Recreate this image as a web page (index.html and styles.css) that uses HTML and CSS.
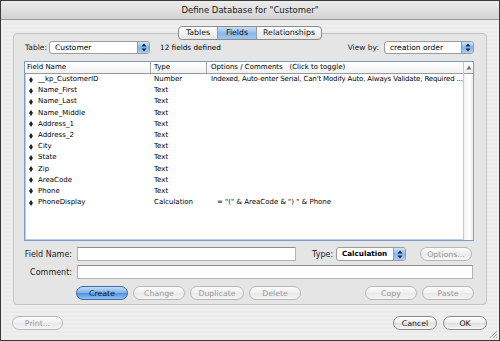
FILE: index.html
```html
<!DOCTYPE html>
<html>
<head>
<meta charset="utf-8">
<title>Define Database</title>
<link rel="stylesheet" href="styles.css">
</head>
<body>
<div class="window">
  <div class="titlebar">Define Database for "Customer"</div>
  <div class="body">
    <div class="tabs">
      <span class="tab t1">Tables</span>
      <span class="tab t2 sel">Fields</span>
      <span class="tab t3">Relationships</span>
    </div>
    <div class="group">
      <div class="toprow">
        <span class="lbl lbl-table">Table:</span>
        <div class="popup pop-table"><span class="ptext">Customer</span><span class="parrows"><svg width="6" height="9" viewBox="0 0 6 9"><path d="M3 0.5L5.5 3.5H0.5Z M3 8.5L5.5 5.5H0.5Z" fill="#1c2633"/></svg></span></div>
        <span class="count">12 fields defined</span>
        <span class="spacer"></span>
        <span class="lbl lbl-view">View by:</span>
        <div class="popup pop-view"><span class="ptext">creation order</span><span class="parrows"><svg width="6" height="9" viewBox="0 0 6 9"><path d="M3 0.5L5.5 3.5H0.5Z M3 8.5L5.5 5.5H0.5Z" fill="#1c2633"/></svg></span></div>
      </div>
      <div class="list">
        <div class="lmain">
          <div class="lhead">
            <div class="c1">Field Name</div>
            <div class="c2">Type</div>
            <div class="c3">Options / Comments&nbsp;&nbsp;&nbsp;(Click to toggle)</div>
          </div>
          <div class="lrows">
            <div class="row"><div class="c1"><i class="mk"></i><span>__kp_CustomerID</span></div><div class="c2">Number</div><div class="c3 opts">Indexed, Auto-enter Serial, Can't Modify Auto, Always Validate, Required ...</div></div>
            <div class="row"><div class="c1"><i class="mk"></i><span>Name_First</span></div><div class="c2">Text</div><div class="c3"></div></div>
            <div class="row"><div class="c1"><i class="mk"></i><span>Name_Last</span></div><div class="c2">Text</div><div class="c3"></div></div>
            <div class="row"><div class="c1"><i class="mk"></i><span>Name_Middle</span></div><div class="c2">Text</div><div class="c3"></div></div>
            <div class="row"><div class="c1"><i class="mk"></i><span>Address_1</span></div><div class="c2">Text</div><div class="c3"></div></div>
            <div class="row"><div class="c1"><i class="mk"></i><span>Address_2</span></div><div class="c2">Text</div><div class="c3"></div></div>
            <div class="row"><div class="c1"><i class="mk"></i><span>City</span></div><div class="c2">Text</div><div class="c3"></div></div>
            <div class="row"><div class="c1"><i class="mk"></i><span>State</span></div><div class="c2">Text</div><div class="c3"></div></div>
            <div class="row"><div class="c1"><i class="mk"></i><span>Zip</span></div><div class="c2">Text</div><div class="c3"></div></div>
            <div class="row"><div class="c1"><i class="mk"></i><span>AreaCode</span></div><div class="c2">Text</div><div class="c3"></div></div>
            <div class="row"><div class="c1"><i class="mk"></i><span>Phone</span></div><div class="c2">Text</div><div class="c3"></div></div>
            <div class="row"><div class="c1"><i class="mk"></i><span>PhoneDisplay</span></div><div class="c2">Calculation</div><div class="c3 calc">= "(" &amp; AreaCode &amp; ") " &amp; Phone</div></div>
          </div>
        </div>
        <div class="vscroll">
          <div class="vtop"><svg width="6" height="5" viewBox="0 0 6 5"><path d="M3 0.5L5.5 4.5H0.5Z" fill="#6b7380"/></svg></div>
          <div class="vtrack"></div>
        </div>
      </div>
      <div class="frow frow-name">
        <span class="flabel">Field Name:</span>
        <div class="input in-name"></div>
        <span class="lbl type-lbl">Type:</span>
        <div class="popup pop-type"><span class="ptext bold">Calculation</span><span class="parrows"><svg width="6" height="9" viewBox="0 0 6 9"><path d="M3 0.5L5.5 3.5H0.5Z M3 8.5L5.5 5.5H0.5Z" fill="#1c2633"/></svg></span></div>
        <span class="btn dis btn-options">Options...</span>
      </div>
      <div class="frow frow-comment">
        <span class="flabel">Comment:</span>
        <div class="input in-comment"></div>
      </div>
      <div class="brow">
        <span class="btn primary w52">Create</span>
        <span class="btn dis w52">Change</span>
        <span class="btn dis w54">Duplicate</span>
        <span class="btn dis w52">Delete</span>
        <span class="spacer"></span>
        <span class="btn dis w52">Copy</span>
        <span class="btn dis w52">Paste</span>
      </div>
    </div>
    <div class="bottom">
      <span class="btn dis w51">Print...</span>
      <span class="spacer"></span>
      <span class="btn w44">Cancel</span>
      <span class="btn w44">OK</span>
    </div>
  </div>
  <div class="grip"><svg width="9" height="9" viewBox="0 0 9 9"><path d="M8 1L1 8M8 4L4 8M8 7L7 8" stroke="#9a9a9a" stroke-width="1"/></svg></div>
</div>
</body>
</html>
```

FILE: styles.css
```css
* { box-sizing: border-box; margin: 0; padding: 0; }
html, body { width: 500px; height: 341px; overflow: hidden; }
body {
  font-family: "DejaVu Sans", "Liberation Sans", sans-serif;
  font-size: 7px;
  color: #000;
  background: #fff;
}
.window {
  width: 500px;
  height: 341px;
  border: 1px solid #3a3a3a;
  background: repeating-linear-gradient(#efefef 0 2px, #eaeaea 2px 4px);
  display: flex;
  flex-direction: column;
  position: relative;
}
.titlebar {
  flex: none;
  height: 19px;
  line-height: 18px;
  text-align: center;
  font-size: 8.5px;
  color: #1a1a1a;
  background: linear-gradient(#ececec, #d3d3d3);
  border-bottom: 1px solid #9c9c9c;
}
.body {
  flex: 1;
  display: flex;
  flex-direction: column;
  padding: 6px 12px 0 12px;
}
.tabs {
  align-self: center;
  display: flex;
  height: 14px;
  border: 1px solid #8c8c8c;
  border-radius: 4px;
  background: linear-gradient(#ffffff, #e6e6e6);
  position: relative;
  z-index: 1;
  overflow: hidden;
}
.tab {
  font-size: 7.8px;
  line-height: 12px;
  text-align: center;
  color: #111;
}
.tab + .tab { border-left: 1px solid #9a9a9a; }
.t1 { width: 38px; }
.t2 { width: 39px; }
.t3 { width: 65px; }
.tab.sel {
  background: linear-gradient(#c9def7, #8ab8ee 55%, #9fc6f2);
}
.group {
  margin-top: -7px;
  border: 1px solid #c4c4c4;
  border-radius: 4px;
  background: #e5e5e5;
  padding: 7px 12px 4px 10px;
  display: flex;
  flex-direction: column;
}
.toprow {
  height: 13px;
  display: flex;
  align-items: center;
}
.lbl { font-size: 7.5px; color: #222; white-space: nowrap; }
.lbl-table { width: 25px; padding-left: 1px; }
.lbl-view { margin-right: 5px; }
.spacer { flex: 1; }
.count { margin-left: 10px; font-size: 7.3px; }
.popup {
  height: 13px;
  display: flex;
  align-items: stretch;
  background: #fff;
  border: 1px solid #9c9c9c;
  border-radius: 3px;
  overflow: hidden;
}
.ptext {
  flex: 1;
  padding-left: 5px;
  font-size: 7.5px;
  line-height: 11px;
  white-space: nowrap;
}
.ptext.bold { font-weight: bold; font-size: 7.2px; }
.parrows {
  width: 12px;
  display: flex;
  align-items: center;
  justify-content: center;
  background: linear-gradient(#d3e5fa, #86b5ec 50%, #a9cdf5);
  border-left: 1px solid #7f9fc8;
}
.pop-table { width: 101px; }
.pop-view { width: 90px; }
.pop-type { width: 70px; height: 14px; }
.pop-type .ptext { line-height: 12px; }
.list {
  margin-top: 7px;
  height: 180px;
  display: flex;
  background: #fff;
  border: 1px solid #7d9cc8;
  box-shadow: inset 0 0 0 1px #b9cde8;
}
.lmain { flex: 1; display: flex; flex-direction: column; }
.lhead {
  height: 12px;
  display: flex;
  border-bottom: 1px solid #9a9a9a;
  background: linear-gradient(#ffffff, #f1f1f1);
  line-height: 11px;
}
.lhead .c1 { padding-left: 2px; }
.lhead .c2 { padding-left: 3px; border-left: 1px solid #a8a8a8; }
.lhead .c3 { padding-left: 4px; border-left: 1px solid #a8a8a8; }
.c1 { width: 125px; display: flex; align-items: center; }
.c2 { width: 56px; }
.c3 { flex: 1; white-space: nowrap; overflow: hidden; }
.row {
  display: flex;
  height: 11.2px;
  line-height: 11.2px;
}
.row .c1 { padding-left: 4px; }
.row .c2 { padding-left: 4px; }
.row .c3 { padding-left: 5px; }
.row .c3.opts { letter-spacing: -0.14px; }
.row .c3.calc { padding-left: 11px; }
.mk {
  width: 4px;
  margin-right: 5px;
  display: flex;
  flex-direction: column;
}
.mk::before {
  content: "";
  border-left: 2px solid transparent;
  border-right: 2px solid transparent;
  border-bottom: 3px solid #222;
}
.mk::after {
  content: "";
  border-left: 2px solid transparent;
  border-right: 2px solid transparent;
  border-top: 3px solid #222;
}
.vscroll {
  width: 10px;
  display: flex;
  flex-direction: column;
  border-left: 1px solid #c9c9c9;
}
.vtop {
  height: 12px;
  display: flex;
  align-items: center;
  justify-content: center;
  border-bottom: 1px solid #9a9a9a;
  background: linear-gradient(#ffffff, #ececec);
}
.vtrack {
  flex: 1;
  background: linear-gradient(to right, #f2f2f2, #ffffff 60%, #ededed);
}
.frow {
  display: flex;
  align-items: center;
  height: 14px;
}
.frow-name { margin-top: 6px; }
.frow-comment { margin-top: 4px; }
.flabel {
  flex: none;
  width: 53px;
  display: flex;
  justify-content: flex-end;
  white-space: nowrap;
  padding-right: 5px;
  font-size: 8px;
  color: #222;
}
.input {
  height: 14px;
  background: #fff;
  border: 1px solid #b4b4b4;
  border-top-color: #8e8e8e;
}
.in-name { width: 219px; }
.in-comment { flex: 1; margin-right: 1px; }
.type-lbl { margin-left: 16px; width: 24px; font-size: 8px; }
.btn {
  height: 14px;
  display: inline-flex;
  align-items: center;
  justify-content: center;
  font-size: 7.8px;
  color: #111;
  white-space: nowrap;
  border: 1px solid #8a8a8a;
  border-radius: 7px;
  background: linear-gradient(#ffffff, #ececec 50%, #dedede 51%, #f6f6f6);
}
.btn.dis {
  color: #9a9a9a;
  border-color: #b8b8b8;
  background: linear-gradient(#fbfbfb, #f0f0f0 50%, #e8e8e8 51%, #f6f6f6);
}
.btn.primary {
  color: #0c1a30;
  border-color: #3f6aa3;
  background: linear-gradient(#c3dcf8, #7fb0ec 50%, #4f8fdd 51%, #93c1f2);
}
.btn-options { margin-left: 14px; width: 52px; }
.w44 { width: 44px; }
.w51 { width: 51px; }
.w52 { width: 52px; }
.w54 { width: 54px; }
.brow {
  margin-top: 7px;
  height: 14px;
  display: flex;
  gap: 5px;
  padding-left: 52px;
}
.bottom {
  margin-top: 11px;
  height: 14px;
  display: flex;
  gap: 6px;
}
.bottom .w51 { margin-left: -1px; }
.grip {
  position: absolute;
  right: 1px;
  bottom: 1px;
  width: 9px;
  height: 9px;
}
```
